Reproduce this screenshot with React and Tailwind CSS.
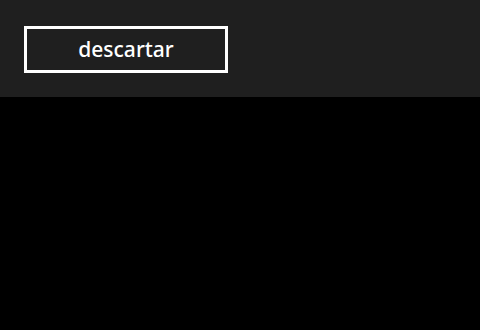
export default function App() {
  return (
    <div className="w-[480px] h-[330px] bg-black flex flex-col">
      <div className="h-[97px] bg-[#1f1f1f] flex items-start pt-[26px] pl-[24px]">
        <button className="w-[204px] h-[47px] border-[3px] border-white bg-[#1f1f1f] text-white text-[21px] font-medium leading-none flex items-center justify-center font-['Noto_Sans',sans-serif]">
          descartar
        </button>
      </div>
    </div>
  );
}
